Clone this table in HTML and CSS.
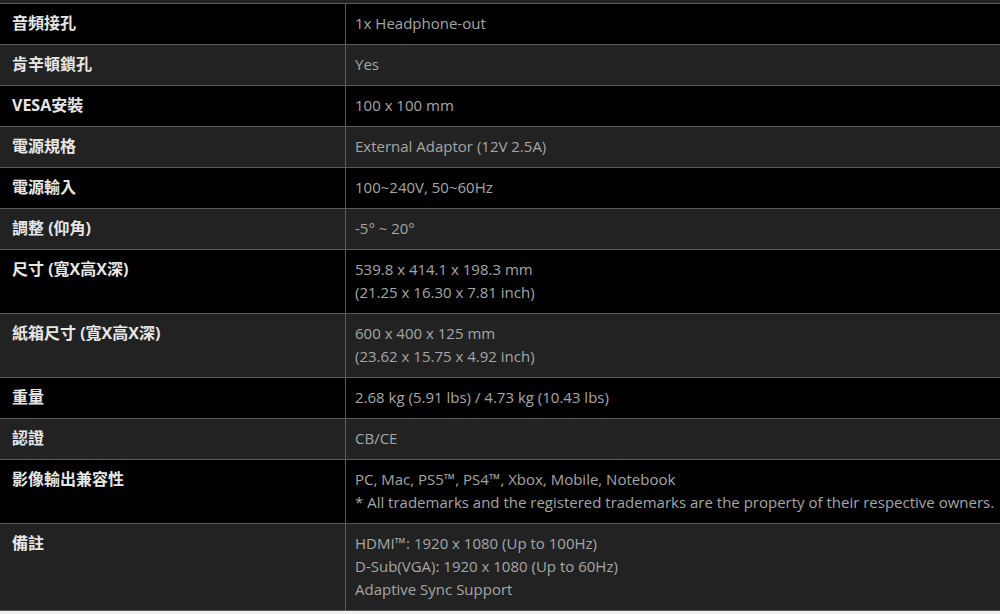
FILE: index.html
```html
<!DOCTYPE html>
<html lang="zh-Hant">
<head>
<meta charset="utf-8">
<title>規格</title>
<link rel="stylesheet" href="styles.css">
</head>
<body>
<div class="specs">
  <div class="prev-strip"></div>
  <table class="spec-table">
    <tbody>
      <tr class="odd"><th>音頻接孔</th><td>1x Headphone-out</td></tr>
      <tr class="even"><th>肯辛頓鎖孔</th><td>Yes</td></tr>
      <tr class="odd"><th>VESA安裝</th><td>100 x 100 mm</td></tr>
      <tr class="even"><th>電源規格</th><td>External Adaptor (12V 2.5A)</td></tr>
      <tr class="odd"><th>電源輸入</th><td>100~240V, 50~60Hz</td></tr>
      <tr class="even"><th>調整 (仰角)</th><td>-5° ~ 20°</td></tr>
      <tr class="odd"><th>尺寸 (寬X高X深)</th><td>539.8 x 414.1 x 198.3 mm<br>(21.25 x 16.30 x 7.81 inch)</td></tr>
      <tr class="even"><th>紙箱尺寸 (寬X高X深)</th><td>600 x 400 x 125 mm<br>(23.62 x 15.75 x 4.92 inch)</td></tr>
      <tr class="odd"><th>重量</th><td>2.68 kg (5.91 lbs) / 4.73 kg (10.43 lbs)</td></tr>
      <tr class="even"><th>認證</th><td>CB/CE</td></tr>
      <tr class="odd"><th>影像輸出兼容性</th><td>PC, Mac, PS5™, PS4™, Xbox, Mobile, Notebook<br>* All trademarks and the registered trademarks are the property of their respective owners.</td></tr>
      <tr class="even"><th>備註</th><td>HDMI™: 1920 x 1080 (Up to 100Hz)<br>D-Sub(VGA): 1920 x 1080 (Up to 60Hz)<br>Adaptive Sync Support</td></tr>
    </tbody>
  </table>
</div>
</body>
</html>
```
FILE: styles.css
```css
html, body {
  margin: 0;
  padding: 0;
  background: #f0f0f0;
}
.specs {
  width: 1000px;
}
.prev-strip {
  height: 3px;
  background: #222;
}
.spec-table {
  width: 1000px;
  border-collapse: collapse;
  table-layout: fixed;
}
.spec-table th,
.spec-table td {
  border-top: 1px solid #5a5a5a;
  border-bottom: 1px solid #5a5a5a;
  vertical-align: top;
  line-height: 23px;
  padding: 8px 9px 9px;
  text-align: left;
}
.spec-table th {
  width: 324px;
  padding-left: 12px;
  border-right: 1px solid #5a5a5a;
  font-family: "Open Sans", "Noto Sans CJK TC", sans-serif;
  font-weight: 700;
  font-size: 16px;
  color: #e6e6e6;
}
.spec-table td {
  font-family: "Open Sans", "Noto Sans CJK TC", sans-serif;
  font-size: 15px;
  color: #a6a6a6;
  white-space: nowrap;
}
.odd { background: #000; }
.even { background: #222; }
```
